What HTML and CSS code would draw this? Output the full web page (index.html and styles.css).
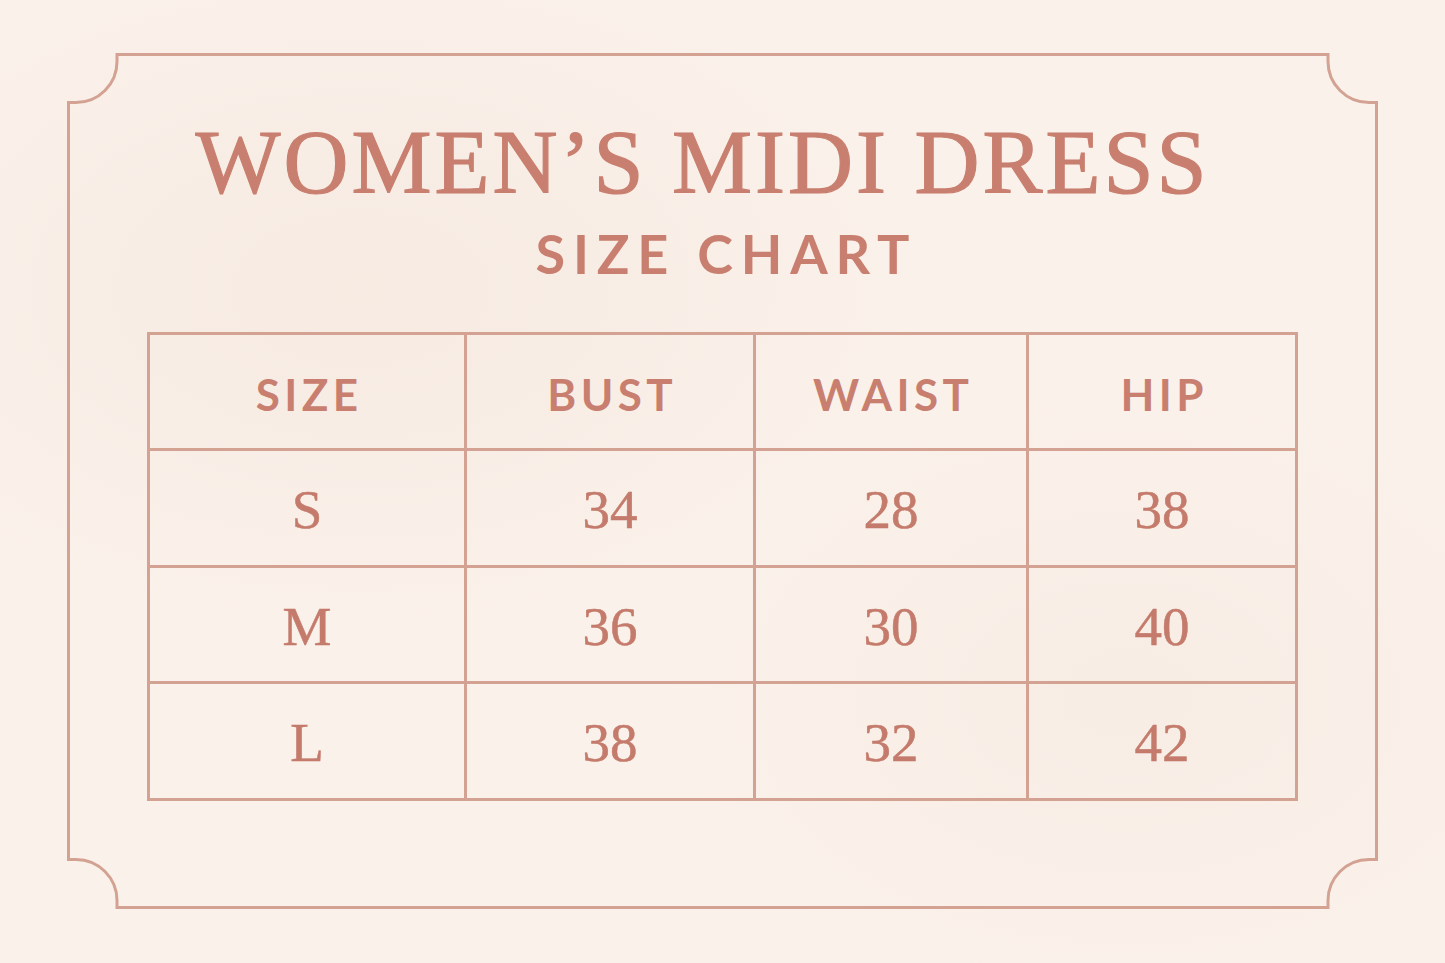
FILE: index.html
```html
<!DOCTYPE html>
<html lang="en">
<head>
<meta charset="utf-8">
<title>Women’s Midi Dress Size Chart</title>
<link rel="stylesheet" href="styles.css">
</head>
<body>
<main class="page">
  <section class="card">
    <svg class="frame" viewBox="0 0 1311 856" preserveAspectRatio="none" aria-hidden="true">
      <path d="M50 1.5 H1261 V8.5 A41 41 0 0 0 1302 49.5 H1309.5 V806.5 H1302 A41 41 0 0 0 1261 847.5 V854.5 H50 V847.5 A41 41 0 0 0 9 806.5 H1.5 V49.5 H9 A41 41 0 0 0 50 8.5 Z" />
    </svg>
    <h1 class="title">WOMEN’S MIDI DRESS</h1>
    <h2 class="subtitle">SIZE CHART</h2>
    <table class="chart">
      <colgroup>
        <col class="c1"><col class="c2"><col class="c3"><col class="c4">
      </colgroup>
      <thead>
        <tr><th>SIZE</th><th>BUST</th><th>WAIST</th><th>HIP</th></tr>
      </thead>
      <tbody>
        <tr><td>S</td><td>34</td><td>28</td><td>38</td></tr>
        <tr><td>M</td><td>36</td><td>30</td><td>40</td></tr>
        <tr><td>L</td><td>38</td><td>32</td><td>42</td></tr>
      </tbody>
    </table>
  </section>
</main>
</body>
</html>
```
FILE: styles.css
```css
html, body {
  margin: 0;
  padding: 0;
}
body {
  width: 1445px;
  height: 963px;
  overflow: hidden;
  background:
    radial-gradient(ellipse 55% 50% at 25% 30%, rgba(242, 226, 215, 0.45), rgba(242, 226, 215, 0) 70%),
    radial-gradient(ellipse 45% 45% at 78% 72%, rgba(244, 230, 220, 0.4), rgba(244, 230, 220, 0) 70%),
    #faf1ea;
  font-family: "Liberation Serif", "DejaVu Serif", serif;
  color: #c47b6c;
}
.page {
  padding: 53px 67px 54px 67px;
}
.card {
  position: relative;
  height: 856px;
  box-sizing: border-box;
  padding-top: 65px;
  display: flex;
  flex-direction: column;
  align-items: center;
}
.frame {
  position: absolute;
  inset: 0;
  width: 100%;
  height: 100%;
  pointer-events: none;
}
.frame path {
  fill: none;
  stroke: #d3a293;
  stroke-width: 3;
}
.title {
  margin: 0;
  padding-right: 40px;
  font-family: "Liberation Serif", "DejaVu Serif", serif;
  font-weight: 400;
  font-size: 90px;
  line-height: 90px;
  letter-spacing: 3px;
  color: #c97f6f;
  -webkit-text-stroke: 1.2px #c97f6f;
}
.subtitle {
  margin: 14px 0 0;
  font-family: Lato, "Open Sans", sans-serif;
  font-weight: 700;
  font-size: 54px;
  line-height: 64px;
  letter-spacing: 0.145em;
  padding-left: 0.145em;
  color: #c97f6f;
}
.chart {
  margin-top: 46px;
  width: 1148px;
  table-layout: fixed;
  border-collapse: collapse;
}
.chart .c1 { width: 317px; }
.chart .c2 { width: 289px; }
.chart .c3 { width: 273px; }
.chart .c4 { width: 269px; }
.chart th,
.chart td {
  border: 3px solid #d3a293;
  padding: 0;
  text-align: center;
  vertical-align: middle;
}
.chart th {
  height: 109px;
  padding: 4px 0 0 0.1em;
  font-family: Lato, "Open Sans", sans-serif;
  font-weight: 700;
  font-size: 44px;
  letter-spacing: 0.1em;
  color: #c97f6f;
}
.chart td {
  height: 109.5px;
  padding-top: 4px;
  font-family: "Liberation Serif", "DejaVu Serif", serif;
  font-size: 55px;
  color: #c47b6c;
  -webkit-text-stroke: 0.5px #c47b6c;
}
```
